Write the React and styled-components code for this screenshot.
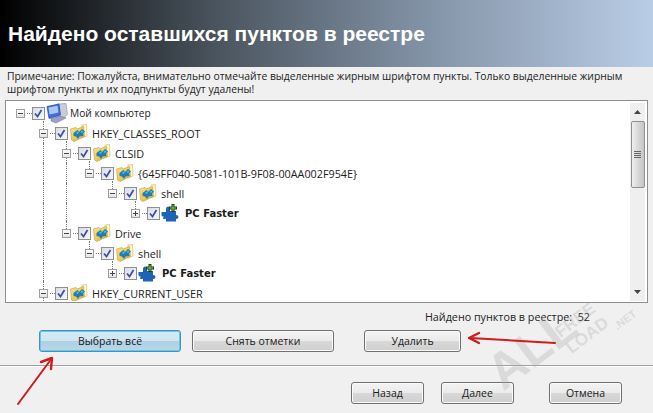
import React from "react";
import styled, { createGlobalStyle } from "styled-components";

const Global = createGlobalStyle`
  html, body { margin: 0; padding: 0; background: #f0f0f0; }
  body { font-family: "Open Sans", "Noto Sans", sans-serif; font-size: 11px; color: #111; }
`;
const Page = styled.div`position: relative; width: 653px; height: 413px; overflow: hidden; display: flex; flex-direction: column;`;
const Header = styled.header`
  height: 67px; box-sizing: border-box; padding: 20px 0 0 8px;
  background: linear-gradient(90deg, #000 0%, #4a545e 33%, #8494a8 66%, #b9cde6 100%);
  font: bold 21px/27px "Liberation Sans", sans-serif; color: #fff;
`;
const Note = styled.p`margin: 0; padding: 3px 7px 0; height: 33px; box-sizing: border-box; font-size: 10.35px; line-height: 13px; color: #222;`;
const TreeBox = styled.div`
  margin: 0 5px; height: 203px; box-sizing: border-box; border: 1px solid #8f8f8f; background: #fff;
  padding: 2px 2px 1px 0; display: flex; overflow: hidden;
`;
const Tree = styled.div`flex: 1; overflow: hidden;`;
const Row = styled.div`display: flex; align-items: center; height: 20px; padding-left: 4px;`;
const Guide = styled.span`
  width: 23px; height: 20px; box-sizing: border-box; flex: none; margin-left: ${p => p.$first ? "10px" : 0};
  border-left: ${p => p.$on ? "1px dotted #777" : "1px solid transparent"};
`;
const RootPad = styled.span`width: 6px; flex: none;`;
const Exp = styled.span`
  position: relative; width: 9px; height: 9px; box-sizing: border-box; flex: none; margin-right: 2px;
  margin-left: ${p => p.$nested ? "-4px" : 0};
  border: 1px solid #a0a0a0; background: linear-gradient(#fff, #e4e4e4);
  &::before { content: ""; position: absolute; left: 1px; top: 3px; width: 5px; height: 1px; background: #444; }
  &::after { content: ""; position: absolute; left: 3px; top: 1px; width: 1px; height: 5px; background: ${p => p.$plus ? "#444" : "transparent"}; }
`;
const Stub = styled.i`position: absolute; left: 3px; bottom: 8px; height: 8px; width: 0; border-left: 1px dotted #777;`;
const Down = styled.i`position: absolute; left: 3px; top: 8px; height: 7px; width: 0; border-left: 1px dotted #777;`;
const Dash = styled.i`width: 5px; flex: none; border-top: 1px dotted #777;`;
const Check = styled.span`
  width: 13px; height: 13px; box-sizing: border-box; flex: none; margin-right: 1px;
  border: 1px solid #8e8f8f; background: linear-gradient(135deg, #d9dee6, #f6f7f9);
  display: flex; align-items: center; justify-content: center;
`;
const Label = styled.span`
  margin-left: ${p => p.$gap}px; white-space: nowrap; color: #1c1c1c;
  font: ${p => p.$bold ? `bold 10px "DejaVu Sans", sans-serif` : `${p.$size || 10.8}px "Open Sans", sans-serif`};
`;
const Scroll = styled.div`width: 15px; flex: none; background: #efefef; display: flex; flex-direction: column; align-items: center;`;
const ScrollBtn = styled.div`height: 18px; width: 100%; flex: none; display: flex; align-items: center; justify-content: center;`;
const Thumb = styled.div`
  width: 14px; height: 67px; box-sizing: border-box; border: 1px solid #8f8f8f; border-radius: 2px;
  background: linear-gradient(90deg, #efefef, #d6d6d6 55%, #c6c6c6);
  display: flex; flex-direction: column; align-items: center; justify-content: center; gap: 1px; flex: none;
`;
const Grip = styled.span`width: 7px; height: 1px; background: #666;`;
const Track = styled.div`flex: 1;`;
const Count = styled.div`text-align: right; height: 16px; padding: 7px 63px 0 0; line-height: 15px; font-size: 10.75px; color: #222;`;
const ActionBar = styled.div`display: flex; gap: 11px; padding: 4px 0 0 39px; height: 39px; box-sizing: border-box;`;
const Btn = styled.button`
  width: ${p => p.$w}px; height: 22px; padding: 0; margin-left: ${p => p.$ml || 0}px; flex: none;
  border: 1px solid ${p => p.$focus ? "#3c93bb" : "#707070"}; border-radius: 3px;
  font: 10.5px "Open Sans", sans-serif; color: #1a1a1a;
  background: ${p => p.$focus
    ? "linear-gradient(#d3ecf8 0%, #d0e5f0 48%, #aed0e3 52%, #b8d8ea 100%)"
    : "linear-gradient(#f3f3f3 0%, #ebebeb 48%, #d8d8d8 52%, #cfcfcf 100%)"};
  box-shadow: inset 0 0 0 1px ${p => p.$focus ? "#6cc6ea" : "#fbfbfb"};
`;
const Rule = styled.hr`margin: 0; border: 0; height: 2px; flex: none; background: linear-gradient(#a0a0a0 50%, #fff 50%);`;
const NavBar = styled.div`display: flex; padding: 15px 0 0 351px;`;
const Overlay = styled.svg`position: absolute; left: 0; top: 0; pointer-events: none;`;
const Water = styled.div`
  position: absolute; pointer-events: none; white-space: nowrap; color: rgba(170, 170, 170, 0.32);
  left: ${p => p.$x}px; top: ${p => p.$y}px; font: bold ${p => p.$s}px/1 "Liberation Sans", sans-serif;
  transform: rotate(-37deg); transform-origin: left top;
`;

const Tick = () => (
  <svg width="9" height="9" viewBox="0 0 9 9"><path d="M1 4.5 L3.5 7.5 L7.5 1" fill="none" stroke="#3c4f9a" strokeWidth="1.7" /></svg>
);
const Folder = () => (
  <svg width="19" height="18" viewBox="0 0 19 18" style={{ flex: "none" }}>
    <defs>
      <linearGradient id="fy" x1="0" y1="0" x2="1" y2="1">
        <stop offset="0" stopColor="#fde48a" />
        <stop offset="1" stopColor="#e0ae35" />
      </linearGradient>
    </defs>
    <path d="M13 1 L17.5 0.5 L18 12 L13 14 Z" fill="#fff6cf" stroke="#d2b458" strokeWidth="0.6" />
    <path d="M1.5 5 L7 3.5 L8 5 L14.5 2.5 L15.5 12.5 L5 17.5 L2.5 16 Z" fill="url(#fy)" stroke="#c39c38" strokeWidth="0.6" />
    <path d="M4.5 9 L8.5 6 L10 8 L13 5 L16 7.5 L14 9.5 L14.5 12 L10.5 12.5 L9 15 L7 12.5 L4.5 12 Z" fill="#1d7fb5" />
    <path d="M8.5 7.5 L10 8.5 L8.5 10 L7 9 Z M13 6.5 L14.5 7.5 L13 9 L11.5 8 Z" fill="#49c4dc" />
  </svg>
);
const Computer = () => (
  <svg width="22" height="21" viewBox="0 0 22 21" style={{ flex: "none" }}>
    <path d="M11 1 L20 0.5 L21.5 11 L18 15 L11 14 Z" fill="#c9cdd6" stroke="#8d93a5" strokeWidth="0.6" />
    <path d="M1 3.5 L13 1 L14.5 12 L3 15.5 Z" fill="#3d6fe0" stroke="#26459c" strokeWidth="0.7" />
    <path d="M2.5 4.5 L11.5 2.8 L12.5 9.5 L3.5 11.5 Z" fill="#a7c7f7" />
    <path d="M5 15.5 L14 13 L20 15 L10 20 L5 18 Z" fill="#9aa0c8" stroke="#6f6f9f" strokeWidth="0.5" />
  </svg>
);
const Puzzle = () => (
  <svg width="18" height="18" viewBox="0 0 18 18" style={{ flex: "none" }}>
    <path d="M0.5 8 L5 8 L5 5 Q5 2.5 7 2.5 Q9 2.5 9 5 L9 7 L15 7 L15 11 Q17.5 11 17.5 13 Q17.5 15 15 15 L15 17.5 L5 17.5 L5 14.5 Q3 15.5 2 14.5 Q2 13 3 12.5 Q0.5 13 0.5 11 Z" fill="#1d63b8" />
    <path d="M10.5 0 h3 v2.5 h2.5 v3 h-2.5 v2.5 h-3 v-2.5 h-2.5 v-3 h2.5 Z" fill="#1f3d12" />
    <path d="M11.5 1 h1 v2.5 h2.5 v1 h-2.5 v2.5 h-1 v-2.5 h-2.5 v-1 h2.5 Z" fill="#7fd04a" />
  </svg>
);

const ICONS = { pc: Computer, folder: Folder, puzzle: Puzzle };
const rows = [
  { d: 0, guides: [], icon: "pc", text: "Мой компьютер", gap: 2, size: 10.2 },
  { d: 1, guides: [], icon: "folder", text: "HKEY_CLASSES_ROOT", down: true, gap: 4 },
  { d: 2, guides: [2], icon: "folder", text: "CLSID", down: true, gap: 4 },
  { d: 3, guides: [2, 3], icon: "folder", text: "{645FF040-5081-101B-9F08-00AA002F954E}", gap: 4 },
  { d: 4, guides: [2, 3], icon: "folder", text: "shell", gap: 4 },
  { d: 5, guides: [2, 3], icon: "puzzle", text: "PC Faster", bold: true, plus: true, gap: 6 },
  { d: 2, guides: [2], icon: "folder", text: "Drive", gap: 4 },
  { d: 3, guides: [2], icon: "folder", text: "shell", gap: 4 },
  { d: 4, guides: [2], icon: "puzzle", text: "PC Faster", bold: true, plus: true, gap: 6 },
  { d: 1, guides: [], icon: "folder", text: "HKEY_CURRENT_USER", down: true, gap: 4 },
];

function TreeRow({ d, guides, icon, text, bold, plus, down, gap, size }) {
  const Icon = ICONS[icon];
  const cells = [];
  for (let i = 1; i <= d; i++) cells.push(<Guide key={i} $first={i === 1} $on={guides.includes(i)} />);
  return (
    <Row>
      {cells}
      {d === 0 && <RootPad />}
      <Exp $plus={plus} $nested={d > 0}>
        {d > 0 && <Stub />}
        {down && <Down />}
      </Exp>
      <Dash />
      <Check><Tick /></Check>
      <Icon />
      <Label $bold={bold} $gap={gap} $size={size}>{text}</Label>
    </Row>
  );
}

export default function App() {
  return (
    <Page>
      <Global />
      <Header>Найдено оставшихся пунктов в реестре</Header>
      <Note>Примечание: Пожалуйста, внимательно отмечайте выделенные жирным шрифтом пункты. Только выделенные жирным шрифтом пункты и их подпункты будут удалены!</Note>
      <TreeBox>
        <Tree>{rows.map((r, i) => <TreeRow key={i} {...r} />)}</Tree>
        <Scroll>
          <ScrollBtn><svg width="7" height="4"><path d="M0 4 L3.5 0 L7 4Z" fill="#444" /></svg></ScrollBtn>
          <Thumb><Grip /><Grip /><Grip /><Grip /></Thumb>
          <Track />
          <ScrollBtn><svg width="7" height="4"><path d="M0 0 L3.5 4 L7 0Z" fill="#444" /></svg></ScrollBtn>
        </Scroll>
      </TreeBox>
      <Count>Найдено пунктов в реестре:&nbsp; 52</Count>
      <ActionBar>
        <Btn $w={142} $focus>Выбрать всё</Btn>
        <Btn $w={142}>Снять отметки</Btn>
        <Btn $w={97} $ml={19}>Удалить</Btn>
      </ActionBar>
      <Rule />
      <NavBar>
        <Btn $w={73}>Назад</Btn>
        <Btn $w={73} $ml={17}>Далее</Btn>
        <Btn $w={73} $ml={35}>Отмена</Btn>
      </NavBar>
      <Water $x={478} $y={358} $s={50}>ALL</Water>
      <Water $x={552} $y={327} $s={17}>FREE</Water>
      <Water $x={563} $y={343} $s={17}>LOAD</Water>
      <Water $x={612} $y={323} $s={11}>.NET</Water>
      <Overlay width="653" height="413" viewBox="0 0 653 413">
        <g fill="none" stroke="#cf1c1c" strokeWidth="2" strokeLinecap="round" strokeLinejoin="round">
          <path d="M18 404 L52 358" />
          <path d="M41 362 L52 358 L51 369" strokeWidth="2.4" />
          <path d="M555 343 L470 338" />
          <path d="M479 333 L469 338 L479 343" strokeWidth="2.4" />
        </g>
      </Overlay>
    </Page>
  );
}
